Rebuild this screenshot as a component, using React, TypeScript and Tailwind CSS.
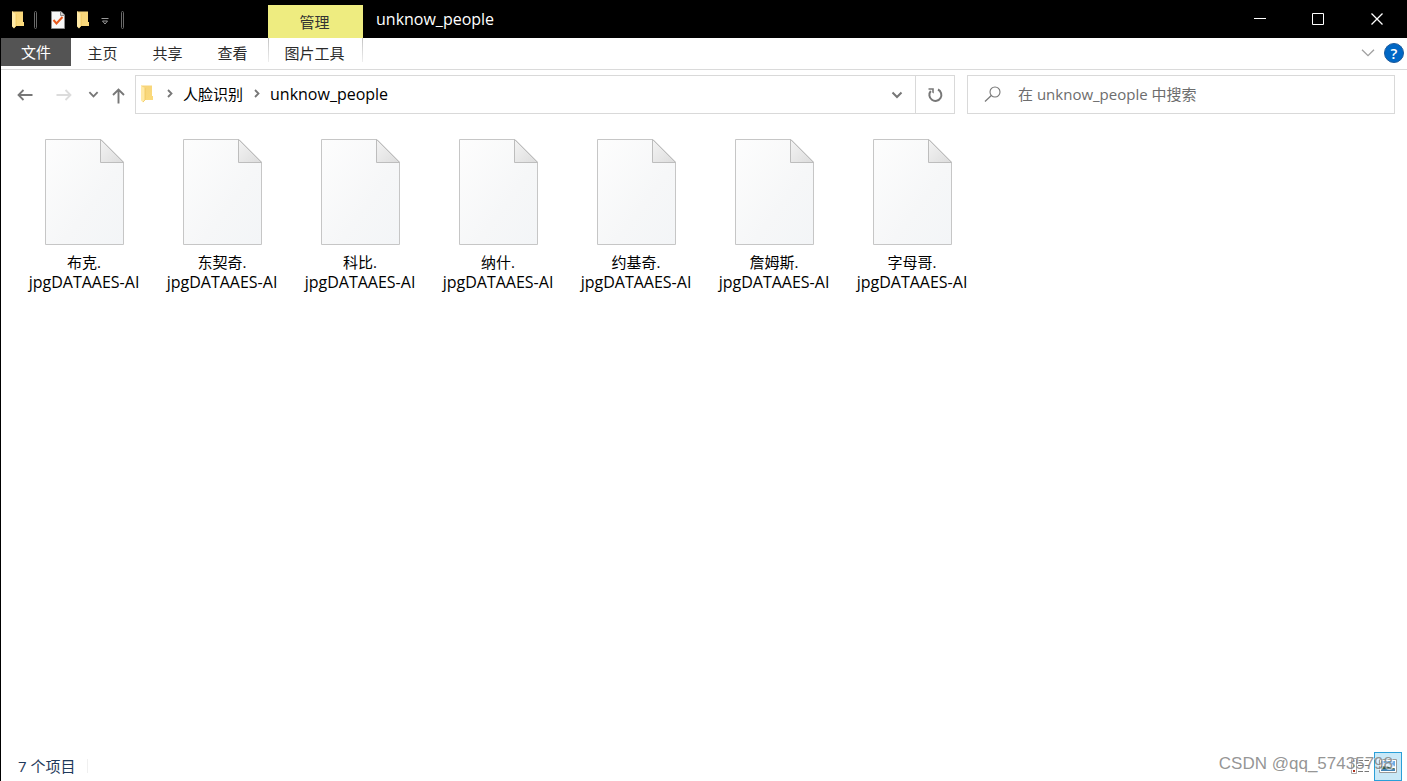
import React from 'react';

const files = ['布克', '东契奇', '科比', '纳什', '约基奇', '詹姆斯', '字母哥'];

function FolderIcon() {
  return (
    <svg width="14" height="18" viewBox="0 0 14 18" aria-hidden="true">
      <defs>
        <linearGradient id="folderBack" x1="0" y1="0" x2="1" y2="1">
          <stop offset="0" stopColor="#f6d37a" />
          <stop offset="1" stopColor="#fbdb7c" />
        </linearGradient>
      </defs>
      <path d="M1 0.5H12V11H13V15H3Z" fill="url(#folderBack)" />
      <path d="M1 0.5H2V1.5L5 3V15L3 17.5L1 15.5Z" fill="#ffe9a6" />
      <path d="M5 3V15L3 17" fill="none" stroke="#efc75c" strokeWidth="0.8" />
    </svg>
  );
}

function CheckedPageIcon() {
  return (
    <svg width="16" height="18" viewBox="0 0 16 18" aria-hidden="true">
      <path d="M1.5 0.5H11L14.5 4V17.5H1.5Z" fill="#f8f8f8" stroke="#8c8c8c" />
      <path d="M10.5 0.5V4.5H14.5" fill="#d5d5d5" stroke="#8c8c8c" />
      <path d="M3.5 9L6.5 12.5L12.5 6" fill="none" stroke="#e8591c" strokeWidth="2" />
    </svg>
  );
}

function Bar() {
  return <span className="h-[18px] w-[3px] rounded-sm border border-[#6a6a6a]" />;
}

function FileIcon() {
  return (
    <svg width="80" height="107" viewBox="0 0 80 107" aria-hidden="true">
      <defs>
        <linearGradient id="page" x1="0" y1="0" x2="1" y2="1">
          <stop offset="0" stopColor="#fdfdfd" />
          <stop offset="0.6" stopColor="#f6f7f8" />
          <stop offset="1" stopColor="#f3f5f7" />
        </linearGradient>
        <linearGradient id="fold" x1="0" y1="0" x2="1" y2="1">
          <stop offset="0" stopColor="#f4f4f4" />
          <stop offset="1" stopColor="#dcdcdc" />
        </linearGradient>
      </defs>
      <path d="M1.5 0.5H57L79.5 23V105.5H1.5Z" fill="url(#page)" stroke="#c6c6c6" />
      <path d="M56.5 0.5L79.5 23.5H56.5Z" fill="url(#fold)" stroke="#bdbdbd" />
    </svg>
  );
}

function Chevron({ className, size = 12, width = 2 }: { className?: string; size?: number; width?: number }) {
  return (
    <svg width={size} height={size} viewBox="0 0 12 12" className={className} aria-hidden="true">
      <path d="M1.5 3.5L6 8L10.5 3.5" fill="none" stroke="currentColor" strokeWidth={width} />
    </svg>
  );
}

function Crumb() {
  return (
    <svg width="8" height="10" viewBox="0 0 8 10" className="shrink-0 text-[#777]" aria-hidden="true">
      <path d="M2 1L5.5 4.5L2 8" fill="none" stroke="currentColor" strokeWidth="1.8" />
    </svg>
  );
}

function TitleBar() {
  return (
    <header className="flex h-[38px] shrink-0 bg-black text-white">
      <div className="flex w-[268px] shrink-0 items-center pt-0.5 pl-[11px]">
        <button aria-label="窗口菜单" className="mr-[9px]"><FolderIcon /></button>
        <Bar />
        <button aria-label="属性" className="ml-[13px]"><CheckedPageIcon /></button>
        <button aria-label="新建文件夹" className="ml-2.5"><FolderIcon /></button>
        <button aria-label="自定义快速访问工具栏" className="mr-3 ml-[11px] pt-1">
          <svg width="8" height="8" viewBox="0 0 8 8" aria-hidden="true">
            <path d="M0.5 0.5H7.5M1.5 3L4 6L6.5 3Z" fill="none" stroke="#aaa" strokeWidth="0.9" />
          </svg>
        </button>
        <Bar />
      </div>
      <button className="mt-[5px] w-[95px] shrink-0 bg-[#eeec80] pr-0.5 text-[#333]">管理</button>
      <h1 className="ml-[13px] self-center text-base">unknow_people</h1>
      <div className="ml-auto flex">
        <button aria-label="最小化" className="grid w-[58px] place-items-center">
          <svg width="12" height="12" viewBox="0 0 12 12"><path d="M0 5.5H12" stroke="white" /></svg>
        </button>
        <button aria-label="最大化" className="grid w-[58px] place-items-center">
          <svg width="12" height="12" viewBox="0 0 12 12"><path d="M0.5 0.5H11.5V11.5H0.5Z" fill="none" stroke="white" /></svg>
        </button>
        <button aria-label="关闭" className="grid w-[60px] place-items-center">
          <svg width="12" height="12" viewBox="0 0 12 12"><path d="M0.5 0.5L11.5 11.5M11.5 0.5L0.5 11.5" stroke="white" strokeWidth="1.3" /></svg>
        </button>
      </div>
    </header>
  );
}

function Ribbon() {
  return (
    <nav className="flex h-8 shrink-0 items-start border-b border-[#dadada] text-[#2b2b2b]">
      <button className="h-7 w-[70px] bg-[#545454] text-white">文件</button>
      {['主页', '共享', '查看'].map((t) => (
        <button key={t} className="h-[30px] w-[65px] pr-0.5">{t}</button>
      ))}
      <div className="ml-0.5 flex h-[30px] w-[95px]">
        <span className="h-6 w-px bg-linear-to-b from-[#c4c4c4] to-[#eeeeee]" />
        <button className="flex-1 pr-0.5">图片工具</button>
        <span className="h-6 w-px bg-linear-to-b from-[#c4c4c4] to-[#eeeeee]" />
      </div>
      <div className="ml-auto flex items-center gap-2 pt-[5px] pr-[3px]">
        <button aria-label="展开功能区" className="text-[#a0a0a0]"><Chevron size={16} width={1} /></button>
        <button aria-label="帮助" className="grid size-5 place-items-center rounded-full border border-[#1c5a9c] bg-[#0067c5] text-[15px] leading-none font-semibold text-white">?</button>
      </div>
    </nav>
  );
}

function AddressRow() {
  return (
    <div className="mt-[5px] flex h-[39px] shrink-0 pr-3">
      <div className="flex w-[134px] shrink-0 items-center pl-4 text-[#777]">
        <button aria-label="后退">
          <svg width="16" height="12" viewBox="0 0 16 12"><path d="M15.5 6H1.5M6.5 1L1.5 6L6.5 11" fill="none" stroke="currentColor" strokeWidth="1.8" /></svg>
        </button>
        <button aria-label="前进" className="ml-[23px] text-[#dcdcdc]">
          <svg width="16" height="12" viewBox="0 0 16 12"><path d="M0.5 6H14.5M9.5 1L14.5 6L9.5 11" fill="none" stroke="currentColor" strokeWidth="1.8" /></svg>
        </button>
        <button aria-label="最近位置" className="ml-4"><Chevron size={11} /></button>
        <button aria-label="上移" className="ml-[13px] pt-0.5">
          <svg width="13" height="16" viewBox="0 0 13 16"><path d="M6.5 15.5V1.5M1 7L6.5 1.5L12 7" fill="none" stroke="currentColor" strokeWidth="1.9" /></svg>
        </button>
      </div>
      <div className="flex min-w-0 flex-[818] border border-[#d9d9d9]">
        <div className="flex min-w-0 flex-1 items-center pb-0.5 pl-1 text-black">
          <FolderIcon />
          <span className="w-3" />
          <Crumb />
          <button className="ml-[9px]">人脸识别</button>
          <span className="w-2.5" />
          <Crumb />
          <button className="ml-[9px] text-base">unknow_people</button>
          <button aria-label="历史记录" className="mr-3 ml-auto pt-0.5 text-[#777]"><Chevron /></button>
        </div>
        <button aria-label="刷新" className="grid w-[39px] shrink-0 place-items-center border-l border-[#d9d9d9] text-[#777]">
          <svg width="16" height="16" viewBox="0 0 16 16">
            <path d="M11 2.5A6 6 0 1 1 3.8 4" fill="none" stroke="currentColor" strokeWidth="2" />
            <path d="M1.5 1.2H6.8V6.6L5.2 5.5V2.8H1.5Z" fill="currentColor" />
          </svg>
        </button>
      </div>
      <label className="ml-3 flex min-w-0 flex-[410] items-center border border-[#d9d9d9] pb-0.5 pl-4">
        <svg width="18" height="16" viewBox="0 0 18 16" className="shrink-0" aria-hidden="true">
          <circle cx="11" cy="6" r="5" fill="none" stroke="#777" strokeWidth="1.1" />
          <path d="M7.3 9.5L1 15.5" stroke="#777" strokeWidth="1.2" />
        </svg>
        <input
          aria-label="搜索"
          placeholder="在 unknow_people 中搜索"
          className="ml-4 min-w-0 flex-1 text-[15px] outline-none placeholder:text-[#6d6d6d]"
        />
      </label>
    </div>
  );
}

export default function App() {
  return (
    <div className="relative flex min-h-screen flex-col bg-white font-['Open_Sans','Noto_Sans_CJK_SC',sans-serif] text-[15px] leading-5 [font-kerning:none]">
      <TitleBar />
      <div className="flex flex-1 flex-col border-l border-black">
        <Ribbon />
        <AddressRow />
        <main className="flex-1 pt-[25px] pl-3.5">
          <ul className="flex flex-wrap">
            {files.map((name) => (
              <li key={name} className="flex w-[138px] flex-col items-center text-center text-black">
                <FileIcon />
                <span className="mt-1.5">{name}.</span>
                <span className="text-base leading-5">jpgDATAAES-AI</span>
              </li>
            ))}
          </ul>
        </main>
        <footer className="flex h-[30px] shrink-0 items-center pr-[5px] pl-[17px] text-[#1e395b]">
          <span>7 个项目</span>
          <span className="ml-3 h-3.5 w-px bg-[#f0f0f0]" />
          <button aria-label="详细信息" className="mr-1 ml-auto">
            <svg width="19" height="16" viewBox="0 0 19 16">
              <path d="M0.5 0.5H5.5V15.5H0.5Z" fill="#fff" stroke="#aaa" />
              <path d="M2 2H4V4H2Z" fill="#3f74a8" />
              <path d="M2 7H4V9H2Z" fill="#6f8f3c" />
              <path d="M2 12H4V14H2Z" fill="#b02e1c" />
              <path d="M7 2.5H12M13.5 2.5H18M7 7.5H12M13.5 7.5H18M7 13.5H12M13.5 13.5H18" stroke="#777" />
            </svg>
          </button>
          <button aria-label="大图标" className="grid h-[29px] w-7 place-items-center border border-[#2a9fd8] bg-[#c9e8f7]">
            <svg width="18" height="14" viewBox="0 0 18 14">
              <path d="M0.5 0.5H17.5V13.5H0.5Z" fill="#fff" stroke="#999" />
              <path d="M2 2H16V7H2Z" fill="#69aee8" />
              <path d="M2 5L6 4L12 6L16 7V8H2Z" fill="#dceefa" />
              <path d="M2 7L8 7.5L16 9.5V10H2Z" fill="#2e5b50" />
              <path d="M2 10H16V12H2Z" fill="#4384b5" />
            </svg>
          </button>
        </footer>
      </div>
      <span className="pointer-events-none absolute right-3.5 bottom-[7px] font-['Liberation_Sans',sans-serif] text-[17px] text-[#888]/90 [text-shadow:1px_1px_0_#ffffffb0]">
        CSDN @qq_57435798
      </span>
    </div>
  );
}
